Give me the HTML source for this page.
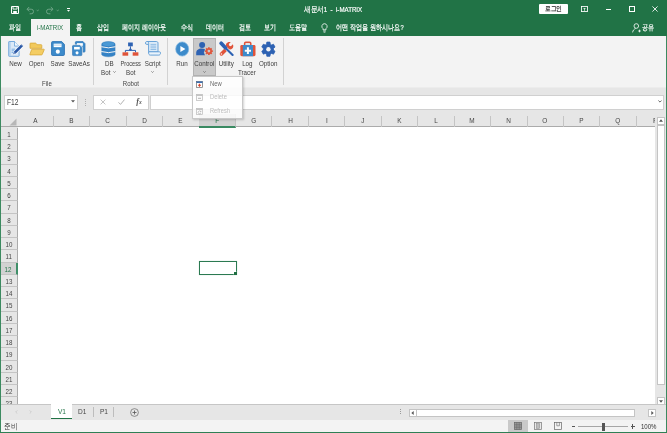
<!DOCTYPE html>
<html lang="ko">
<head>
<meta charset="utf-8">
<title>새문서1 - i-MATRIX</title>
<style>
*{box-sizing:border-box;margin:0;padding:0}
html,body{width:667px;height:433px;overflow:hidden;background:#fff}
body{font-family:"Liberation Sans",sans-serif;font-size:7.5px;color:#333;position:relative}
.abs{position:absolute}
#win{will-change:transform;position:absolute;left:0;top:0;width:667px;height:433px;background:#fff;overflow:hidden}
#title{position:absolute;left:0;top:0;width:667px;height:36px;background:#217346}
.tt{position:absolute;color:#fff;font-size:7.5px;white-space:nowrap;line-height:10px;-webkit-text-stroke:.2px #fff}
.sx{display:inline-block;transform-origin:0 50%;transform:scaleX(.82);white-space:nowrap}
.sxc{display:inline-block;transform-origin:50% 50%;transform:scaleX(.82);white-space:nowrap}
#tabact{position:absolute;left:31px;top:19px;width:38.5px;height:18px;background:#f3f3f3;color:#217346;text-align:center;line-height:18px;font-size:7.5px}
#ribbon{position:absolute;left:1px;top:36px;width:665px;height:52px;background:#f3f3f3;border-bottom:1px solid #ececec}
.lbl{position:absolute;font-size:7.6px;line-height:8.6px;color:#3c3c3c;text-align:center;white-space:nowrap;width:40px}
.grp{position:absolute;font-size:7.4px;line-height:9px;color:#444;text-align:center;white-space:nowrap;width:40px;top:79px}
.sep{position:absolute;top:38px;height:47px;width:1px;background:#d2d2d2}
.ico{position:absolute;top:41px;width:16px;height:15px}
#fbar{position:absolute;left:1px;top:88px;width:665px;height:26px;background:#e6e6e6}
.box{position:absolute;background:#fff;border:1px solid #d0d0d0}
#colhdr{position:absolute;left:1px;top:114px;width:655px;height:13px;background:#e6e6e6;border-bottom:1px solid #ababab}
.ch{position:absolute;top:1.5px;height:11px;width:36.45px;text-align:center;font-size:7.3px;line-height:9.6px;color:#444;border-right:1px solid #c4c4c4}
#rowhdr{position:absolute;left:1px;top:127px;width:17px;height:277px;background:#e6e6e6;overflow:hidden}
.rh{position:absolute;left:0;width:17px;height:12.25px;text-align:center;font-size:7.2px;line-height:13.8px;color:#444;border-bottom:1px solid #c4c4c4;border-right:1px solid #ababab;padding-right:.5px}
#sel{position:absolute;left:199px;top:261px;width:38px;height:14px;border:1px solid #2b7a51;box-shadow:0 0 .6px #2b7a51}
#selh{position:absolute;left:234.3px;top:272.4px;width:3px;height:3px;background:#1f6e42;box-shadow:-.6px -.6px 0 #fff}
#vscroll{position:absolute;left:655px;top:114px;width:11px;height:290px;background:#e6e6e6}
#tabbar{position:absolute;left:1px;top:404px;width:665px;height:16px;background:#e6e6e6;border-top:1px solid #c6c6c6}
#status{position:absolute;left:1px;top:420px;width:665px;height:12px;background:#f3f3f3}
.brd{position:absolute;background:#217346}
.menu{position:absolute;left:192px;top:75.7px;width:50.5px;height:43px;background:rgba(255,255,255,.82);border:1px solid #c8c8c8;box-shadow:1px 1px 2px rgba(0,0,0,.18);z-index:20}
.mi{position:absolute;left:16.8px;font-size:7.4px;line-height:9px;white-space:nowrap}
</style>
</head>
<body>
<div id="win">

<!-- ===== TITLE / TABS ===== -->
<div id="title">
  <!-- quick access: save -->
  <svg class="abs" style="left:11px;top:6px" width="8" height="8" viewBox="0 0 8 8"><path d="M.5 .5h7v7h-7z" fill="none" stroke="#fff" stroke-width="1"/><path d="M2 .5v2.6h4V.5" fill="none" stroke="#fff" stroke-width=".9"/><rect x="2.2" y="5" width="3.6" height="2.5" fill="#fff"/></svg>
  <!-- undo / redo (dim) -->
  <svg class="abs" style="left:26px;top:5.500px" width="14" height="9" viewBox="0 0 14 9"><path d="M1 3.2h4.2a2.3 2.3 0 0 1 0 4.6H3.6" fill="none" stroke="#6fa587" stroke-width="1"/><path d="M3.2 1 1 3.2l2.2 2.2" fill="none" stroke="#6fa587" stroke-width="1"/><path d="M10.6 3.8l1.1 1.1 1.1-1.1" fill="none" stroke="#6fa587" stroke-width=".8"/></svg>
  <svg class="abs" style="left:45px;top:5.500px" width="16" height="9" viewBox="0 0 16 9"><path d="M8 3.2H3.8a2.3 2.3 0 0 0 0 4.6h1.6" fill="none" stroke="#6fa587" stroke-width="1"/><path d="M5.8 1 8 3.2 5.8 5.4" fill="none" stroke="#6fa587" stroke-width="1"/><path d="M11.6 3.8l1.1 1.1 1.1-1.1" fill="none" stroke="#6fa587" stroke-width=".8"/></svg>
  <svg class="abs" style="left:66px;top:7px" width="5" height="6" viewBox="0 0 5 6"><rect x="1" y="1" width="3" height="1" fill="#fff"/><path d="M1 3h3L2.5 4.8z" fill="#fff"/></svg>

  <div class="tt" style="left:304px;top:4.800px"><span class="sx">새문서1 &nbsp;-&nbsp; i-MATRIX</span></div>

  <!-- login button -->
  <div class="abs" style="left:539px;top:3.800px;width:29px;height:10.500px;background:#fff;border-radius:1px;color:#222;font-size:7.200px;line-height:10.500px;text-align:center;-webkit-text-stroke:.2px #222"><span class="sxc">로그인</span></div>
  <!-- ribbon display options -->
  <svg class="abs" style="left:581px;top:6px" width="7" height="6" viewBox="0 0 8 7"><rect x=".5" y=".5" width="7" height="6" fill="none" stroke="#fff" stroke-width="1"/><path d="M4 5.6V2.4M2.8 3.5 4 2.3l1.2 1.2" fill="none" stroke="#fff" stroke-width=".8"/></svg>
  <div class="abs" style="left:606px;top:9px;width:5px;height:1px;background:#fff"></div>
  <div class="abs" style="left:629px;top:6.300px;width:5.500px;height:5.500px;border:1px solid #fff"></div>
  <svg class="abs" style="left:652px;top:6.200px" width="6" height="6" viewBox="0 0 7 7"><path d="M.5 .5l6 6M6.5 .5l-6 6" stroke="#fff" stroke-width="1" fill="none"/></svg>

  <!-- tabs -->
  <div class="tt" style="left:9px;top:23px"><span class="sx" style="transform:scaleX(.76)">파일</span></div>
  <div class="tt" style="left:76px;top:23px"><span class="sx" style="transform:scaleX(.76)">홈</span></div>
  <div class="tt" style="left:96.500px;top:23px"><span class="sx" style="transform:scaleX(.76)">삽입</span></div>
  <div class="tt" style="left:121.800px;top:23px"><span class="sx" style="transform:scaleX(.76)">페이지 레이아웃</span></div>
  <div class="tt" style="left:180.500px;top:23px"><span class="sx" style="transform:scaleX(.76)">수식</span></div>
  <div class="tt" style="left:206px;top:23px"><span class="sx" style="transform:scaleX(.76)">데이터</span></div>
  <div class="tt" style="left:238.500px;top:23px"><span class="sx" style="transform:scaleX(.76)">검토</span></div>
  <div class="tt" style="left:263.700px;top:23px"><span class="sx" style="transform:scaleX(.76)">보기</span></div>
  <div class="tt" style="left:288.500px;top:23px"><span class="sx" style="transform:scaleX(.76)">도움말</span></div>
  <!-- lightbulb -->
  <svg class="abs" style="left:321.200px;top:22.800px" width="7" height="10" viewBox="0 0 7 10"><path d="M3.5 .7a2.7 2.7 0 0 0-1.5 4.9v1.2h3V5.600a2.700 2.700 0 0 0-1.500-4.900z" fill="none" stroke="#fff" stroke-width=".8"/><path d="M2.200 8h2.600M2.600 9.200h1.800" stroke="#fff" stroke-width=".7"/></svg>
  <div class="tt" style="left:335.500px;top:23px"><span class="sx" style="transform:scaleX(.765)">어떤 작업을 원하시나요?</span></div>
  <!-- share -->
  <svg class="abs" style="left:631.500px;top:23px" width="9" height="10" viewBox="0 0 9 10"><circle cx="4.300" cy="3" r="2.300" fill="none" stroke="#fff" stroke-width=".8"/><path d="M.6 9.400c.3-2 1.500-3.400 3-3.900M6.200 8h2.600M7.500 6.700v2.600" fill="none" stroke="#fff" stroke-width=".8"/></svg>
  <div class="tt" style="left:642px;top:23px"><span class="sx" style="transform:scaleX(.76)">공유</span></div>
</div>
<div id="tabact"><span class="sxc">i-MATRIX</span></div>

<!-- ===== RIBBON ===== -->
<div id="ribbon"></div>
<div id="ribicons">
<svg class="abs" style="left:8px;top:41px" width="16" height="16" viewBox="0 0 16 16">
<path d="M1.200 .5h5.300l4.600 4.600v9.700q0 .5-.5 .5H1.200q-.5 0-.5-.5V1q0-.5 .5-.5z" fill="#dbe9f7" stroke="#6aa3da" stroke-width=".9"/>
<path d="M1.200 .9h1.400v14H1.200z" fill="#a9cbec"/>
<path d="M6.500 .5v4.600h4.600" fill="#f2f7fd" stroke="#6aa3da" stroke-width=".8"/>
<path d="M3.600 8.200h3.400M3.600 9.800h3M3.600 11.400h2" stroke="#7aaee2" stroke-width="1"/>
<path d="M14 4.400L6.800 11.600" stroke="#fff" stroke-width="4" stroke-linecap="butt"/>
<path d="M5 13.600l.6-3 2.600 2.400z" fill="#fff"/>
<path d="M14.300 4.100L6.900 11.500" stroke="#2a58a6" stroke-width="2.700"/>
<path d="M13 3.400l2 2" stroke="#fff" stroke-width=".5"/>
<path d="M5.200 13.300l.8-2.700 1.900 1.900z" fill="#2a58a6"/>
<path d="M5.900 11.600l1.100 1.100" stroke="#fff" stroke-width=".5"/>
</svg>
<svg class="abs" style="left:29px;top:42px" width="16" height="14" viewBox="0 0 16 14">
<path d="M1 6.300V1.700q0-.6 .6-.6h4.800q.5 0 .8 .4l.7 1.200h4.300q.6 0 .6 .6v3z" fill="#f2c95c" stroke="#d8a838" stroke-width=".8"/>
<path d="M3.100 7.200h11.700q.6 0 .4 .6l-2 4.700q-.2 .4-.7 .4H1.200q-.5 0-.3-.5l1.700-4.800q.1-.4 .5-.4z" fill="#f4cd63" stroke="#d8a838" stroke-width=".8"/>
</svg>
<svg class="abs" style="left:51px;top:41px" width="15" height="16" viewBox="0 0 15 16"><g transform="translate(0.1 0.1) scale(0.9857142857142858 1.0275862068965518)">
<path d="M.5 1.500q0-1 1-1h9.300l2.700 2.700v9.800q0 1-1 1h-11q-1 0-1-1z" fill="#3d8bcb" stroke="#2f74b5" stroke-width=".9"/>
<rect x="2.600" y="2.500" width="8" height="3.400" fill="#fff"/>
<circle cx="6.800" cy="10.300" r="2.100" fill="#fff"/>
</g><path d="M2.800 4.100h7.400" stroke="#6aa6d9" stroke-width=".5"/></svg>
<svg class="abs" style="left:71px;top:41px" width="16" height="16" viewBox="0 0 16 16"><g transform="translate(4 0.2) scale(0.7428571428571429 0.7793103448275862)">
<path d="M.5 1.500q0-1 1-1h9.300l2.700 2.700v9.800q0 1-1 1h-11q-1 0-1-1z" fill="#3d8bcb" stroke="#2f74b5" stroke-width=".9"/>
<rect x="2.600" y="2.500" width="8" height="3.400" fill="#fff"/>
<circle cx="6.800" cy="10.300" r="2.100" fill="#fff"/>
</g><g transform="translate(1.2 4) scale(0.7142857142857143 0.7586206896551724)"><path d="M.5 1.500q0-1 1-1h9.300l2.700 2.700v9.800q0 1-1 1h-11q-1 0-1-1z" fill="#f3f3f3" stroke="#f3f3f3" stroke-width="2.600"/>
<path d="M.5 1.500q0-1 1-1h9.300l2.700 2.700v9.800q0 1-1 1h-11q-1 0-1-1z" fill="#3d8bcb" stroke="#2f74b5" stroke-width=".9"/>
<rect x="2.600" y="2.500" width="8" height="3.400" fill="#fff"/>
<circle cx="6.800" cy="10.300" r="2.100" fill="#fff"/>
</g></svg>
<svg class="abs" style="left:101px;top:40.500px" width="15" height="17" viewBox="0 0 15 17">
<path d="M.7 3.100a6.700 2.600 0 0 1 13.400 0v10.200a6.700 2.500 0 0 1-13.400 0z" fill="#3583c6" stroke="#2f78b8" stroke-width=".4"/>
<ellipse cx="7.400" cy="3.100" rx="6.100" ry="2.100" fill="#4b99d5"/>
<path d="M.2 5.700q7.200 2.300 14.400 0" fill="none" stroke="#f3f3f3" stroke-width="1"/>
<path d="M.2 10.500q7.200 2.300 14.400 0" fill="none" stroke="#f3f3f3" stroke-width="1"/>
</svg>
<svg class="abs" style="left:122px;top:41.500px" width="17" height="15" viewBox="0 0 17 15">
<rect x="6.100" y=".5" width="4.700" height="3.800" fill="#2d62b3"/>
<path d="M8.450 4.300v3.600M3.400 10.400V8.400h10.100v2" fill="none" stroke="#2d62b3" stroke-width="1"/>
<path d="M8.450 6.100l1.500 1.500-1.500 1.500-1.500-1.500z" fill="#2d62b3"/>
<rect x=".5" y="10.300" width="5.700" height="3.400" fill="#e0543a"/>
<rect x="10.700" y="10.300" width="5.700" height="3.400" fill="#e0543a"/>
</svg>
<svg class="abs" style="left:145px;top:41px" width="16" height="15" viewBox="0 0 16 15">
<path d="M3.600 2.200c0-1.200-.8-1.700-1.600-1.700h9.400c1 0 1.600.7 1.600 1.700v8.600H3.600z" fill="#dcebf8" stroke="#5b9bd5" stroke-width=".9"/>
<path d="M2 .5c-1 0-1.600.7-1.600 1.600 0 .8.600 1.300 1.400 1.300h1.800" fill="#dcebf8" stroke="#5b9bd5" stroke-width=".9"/>
<path d="M3.600 10.800h11c.6 0 .9.500.9 1.300 0 1.100-.7 2-1.700 2H5.300c-1 0-1.700-.9-1.700-2z" fill="#eaf3fb" stroke="#5b9bd5" stroke-width=".9"/>
<path d="M5.500 3.400h5.700M5.500 5.100h5.700M5.500 6.800h5.700M5.500 8.500h5.700" stroke="#7fb2e0" stroke-width=".8"/>
</svg>
<svg class="abs" style="left:175px;top:40.500px" width="15" height="16" viewBox="0 0 15 16">
<ellipse cx="7.200" cy="8" rx="6.500" ry="7.100" fill="#3d8bcb" stroke="#7db4e0" stroke-width=".7"/>
<path d="M5.400 4.900l5 3.100-5 3.100z" fill="#fff"/>
</svg>
<div class="abs" style="left:192.700px;top:37.700px;width:23px;height:38px;background:#c9c9c9;border:1px solid #b3b3b3"></div>
<svg class="abs" style="left:194.500px;top:41px" width="18" height="15" viewBox="0 0 18 15">
<circle cx="7.100" cy="3.900" r="3" fill="#2d62b3"/>
<path d="M1.200 14.300v-2.300c0-2.700 2.300-4.400 5.400-4.400 1.300 0 2.500.3 3.500.9l-1.300 2.900 1.200 2.900z" fill="#2d62b3"/>
<g fill="#e0543a"><circle cx="13.9" cy="10.1" r="2.89"/><rect x="13.00" y="6.20" width="1.79" height="1.95" rx=".3" transform="rotate(0.0 13.9 10.1)"/><rect x="13.00" y="6.20" width="1.79" height="1.95" rx=".3" transform="rotate(45.0 13.9 10.1)"/><rect x="13.00" y="6.20" width="1.79" height="1.95" rx=".3" transform="rotate(90.0 13.9 10.1)"/><rect x="13.00" y="6.20" width="1.79" height="1.95" rx=".3" transform="rotate(135.0 13.9 10.1)"/><rect x="13.00" y="6.20" width="1.79" height="1.95" rx=".3" transform="rotate(180.0 13.9 10.1)"/><rect x="13.00" y="6.20" width="1.79" height="1.95" rx=".3" transform="rotate(225.0 13.9 10.1)"/><rect x="13.00" y="6.20" width="1.79" height="1.95" rx=".3" transform="rotate(270.0 13.9 10.1)"/><rect x="13.00" y="6.20" width="1.79" height="1.95" rx=".3" transform="rotate(315.0 13.9 10.1)"/></g><circle cx="13.9" cy="10.1" r="1.4" fill="#c9c9c9"/>
</svg>
<svg class="abs" style="left:218.500px;top:41px" width="15" height="16" viewBox="0 0 15 16">
<path d="M13.900 3.200l-2 2-1.700-.4-.4-1.700 2-2c-1.500-.5-3.100-.1-4 1-.9 1-1.100 2.400-.6 3.600l-6 6c-.7.700-.7 1.800 0 2.500s1.800.7 2.500 0l6-6c1.200.5 2.600.3 3.600-.6 1.100-1 1.300-2.800.6-4.400z" fill="#e0543a"/>
<circle cx="2.400" cy="13" r=".8" fill="#f3f3f3"/>
<path d="M2 2.200l11.600 11.700" stroke="#f3f3f3" stroke-width="3" stroke-linecap="round"/>
<path d="M7 7.400l6.600 6.500" stroke="#2d62b3" stroke-width="2.100" stroke-linecap="round"/>
<path d="M2.200 2.300l4.200 4.400" stroke="#2d62b3" stroke-width="3.700" stroke-linecap="round"/>
</svg>
<svg class="abs" style="left:239.500px;top:40.500px" width="16" height="16" viewBox="0 0 16 16">
<path d="M4.600 4.400V2.400q0-1.200 1.200-1.200h3.800q1.200 0 1.200 1.200V4.400" fill="#e4e4e4" stroke="#e0543a" stroke-width="1.500"/>
<rect x=".3" y="4" width="15.200" height="11.200" rx="1.400" fill="#e0543a"/>
<rect x="2.800" y="4" width="10.200" height="11.200" fill="#3d8bcb"/>
<path d="M7.900 6.300v6.800M4.800 9.700h6.200" stroke="#fff" stroke-width="2"/>
</svg>
<svg class="abs" style="left:261px;top:40.500px" width="15" height="17" viewBox="0 0 15 17">
<path d="M5.56 3.16L5.84 1.09L8.96 1.09L9.24 3.16L10.63 4.00L12.47 3.22L14.03 6.07L12.47 7.36L12.47 9.04L14.03 10.33L12.47 13.18L10.63 12.40L9.24 13.24L8.96 15.31L5.84 15.31L5.56 13.24L4.17 12.40L2.33 13.18L0.77 10.33L2.33 9.04L2.33 7.36L0.77 6.07L2.33 3.22L4.17 4.00z" fill="#2d62b3" stroke="#2d62b3" stroke-width=".8" stroke-linejoin="round"/><ellipse cx="7.4" cy="8.2" rx="2.18" ry="2.3" fill="#f3f3f3"/>
</svg>
<div class="sep" style="left:92.9px"></div>
<div class="sep" style="left:166.6px"></div>
<div class="sep" style="left:282.7px"></div>
<div class="lbl" style="left:-4.7px;top:59.7px"><span class="sxc">New</span></div>
<div class="lbl" style="left:16.4px;top:59.7px"><span class="sxc">Open</span></div>
<div class="lbl" style="left:37.5px;top:59.7px"><span class="sxc">Save</span></div>
<div class="lbl" style="left:59.1px;top:59.7px"><span class="sxc">SaveAs</span></div>
<div class="lbl" style="left:88.8px;top:59.7px"><span class="sxc">DB</span></div>
<div class="lbl" style="left:85.9px;top:68.8px"><span class="sxc">Bot</span></div>
<div class="lbl" style="left:110.5px;top:59.7px"><span class="sxc" style="transform:scaleX(0.74)">Process</span></div>
<div class="lbl" style="left:110.5px;top:68.8px"><span class="sxc">Bot</span></div>
<div class="lbl" style="left:132.5px;top:59.7px"><span class="sxc">Script</span></div>
<div class="lbl" style="left:162.0px;top:59.7px"><span class="sxc">Run</span></div>
<div class="lbl" style="left:184.2px;top:59.7px"><span class="sxc">Control</span></div>
<div class="lbl" style="left:205.8px;top:59.7px"><span class="sxc">Utility</span></div>
<div class="lbl" style="left:227.2px;top:59.7px"><span class="sxc">Log</span></div>
<div class="lbl" style="left:227.1px;top:68.8px"><span class="sxc">Tracer</span></div>
<div class="lbl" style="left:248.4px;top:59.7px"><span class="sxc">Option</span></div>
<div class="grp" style="left:27.3px;top:78.5px"><span class="sxc">File</span></div>
<div class="grp" style="left:110.5px;top:78.5px"><span class="sxc">Robot</span></div>
<svg class="abs" style="left:112.8px;top:70.8px" width="3" height="2" viewBox="0 0 3 2"><path d="M.3 .3l1.200 1.200L2.700 .3" fill="none" stroke="#555" stroke-width=".6"/></svg>
<svg class="abs" style="left:150.8px;top:70.7px" width="3" height="2" viewBox="0 0 3 2"><path d="M.3 .3l1.200 1.200L2.700 .3" fill="none" stroke="#555" stroke-width=".6"/></svg>
<svg class="abs" style="left:202.8px;top:71px" width="3" height="2" viewBox="0 0 3 2"><path d="M.3 .3l1.200 1.200L2.700 .3" fill="none" stroke="#555" stroke-width=".6"/></svg>
</div>
<div class="menu">
<svg class="abs" style="left:2.800px;top:4.300px" width="7" height="7" viewBox="0 0 7 7"><rect x=".4" y=".4" width="6.200" height="6.200" fill="#fff" stroke="#6b6b6b" stroke-width=".7"/><rect x=".4" y=".4" width="6.200" height="1.600" fill="#3d6fb0"/><path d="M3.500 2.800v3M2 4.300h3" stroke="#d8432a" stroke-width="1.100"/></svg>
<div class="mi" style="top:2.500px;color:#6a6a6a"><span class="sx" style="transform:scaleX(.79)">New</span></div>
<svg class="abs" style="left:2.800px;top:17px" width="7" height="7" viewBox="0 0 7 7"><rect x=".4" y=".4" width="6.200" height="6.200" fill="#fbfbfb" stroke="#b9b9b9" stroke-width=".7"/><rect x=".4" y=".4" width="6.200" height="1.600" fill="#c4c4c4"/><path d="M2 4.300h3" stroke="#b5b5b5" stroke-width="1"/></svg>
<div class="mi" style="top:15.800px;color:#bcbcbc"><span class="sx" style="transform:scaleX(.79)">Delete</span></div>
<svg class="abs" style="left:2.800px;top:31px" width="7" height="7" viewBox="0 0 7 7"><rect x=".4" y=".4" width="6.200" height="6.200" fill="#fbfbfb" stroke="#b9b9b9" stroke-width=".7"/><rect x=".4" y=".4" width="6.200" height="1.600" fill="#c4c4c4"/><path d="M4.800 3.500a1.500 1.500 0 1 0 .2 1.600M5 2.800v1h-1" fill="none" stroke="#b0b0b0" stroke-width=".7"/></svg>
<div class="mi" style="top:29.300px;color:#bcbcbc"><span class="sx" style="transform:scaleX(.77)">Refresh</span></div>
</div>

<!-- ===== FORMULA BAR ===== -->
<div id="fbar"></div>
<div class="box" style="left:3.500px;top:94.500px;width:74px;height:15px"></div>
<div class="abs" style="left:6.500px;top:96.800px;font-size:9px;line-height:10px;color:#444"><span class="sx" style="transform:scaleX(.74)">F12</span></div>
<svg class="abs" style="left:70.500px;top:100px" width="4" height="3" viewBox="0 0 4 3"><path d="M0 .3h4L2 2.600z" fill="#555"/></svg>
<div class="abs" style="left:85px;top:98.500px;width:1px;height:1px;background:#b0b0b0;box-shadow:0 2px 0 #b0b0b0,0 4px 0 #b0b0b0,0 6px 0 #b0b0b0"></div>
<div class="box" style="left:93px;top:94.500px;width:56px;height:15px"></div>
<svg class="abs" style="left:99.500px;top:99px" width="6" height="6" viewBox="0 0 6 6"><path d="M.6 .6l4.800 4.800M5.400 .6L.6 5.400" stroke="#b5b5b5" stroke-width=".8" fill="none"/></svg>
<svg class="abs" style="left:117.500px;top:99px" width="7" height="6" viewBox="0 0 7 6"><path d="M.5 3.400l2 2L6.500 .6" stroke="#a8a8a8" stroke-width=".9" fill="none"/></svg>
<div class="abs" style="left:136.300px;top:97px;font-family:'Liberation Serif',serif;font-style:italic;font-weight:bold;font-size:8px;line-height:10px;color:#555">f<span style="font-size:5.500px">x</span></div>
<div class="box" style="left:150px;top:94.500px;width:513.500px;height:15px"></div>
<svg class="abs" style="left:657.500px;top:100.300px" width="4" height="3" viewBox="0 0 4 3"><path d="M.4 .5l1.600 1.600L3.600 .5" stroke="#444" stroke-width=".8" fill="none"/></svg>

<!-- ===== GRID ===== -->
<div id="colhdr">
<svg class="abs" style="left:8px;top:3.500px" width="8" height="8" viewBox="0 0 8 8"><path d="M7.500 .5v7h-7z" fill="#b7b7b7"/></svg><div class="ch" style="left:16.30px"><span class="sxc" style="transform:scaleX(.88)">A</span></div>
<div class="ch" style="left:52.75px"><span class="sxc" style="transform:scaleX(.88)">B</span></div>
<div class="ch" style="left:89.20px"><span class="sxc" style="transform:scaleX(.88)">C</span></div>
<div class="ch" style="left:125.65px"><span class="sxc" style="transform:scaleX(.88)">D</span></div>
<div class="ch" style="left:162.10px"><span class="sxc" style="transform:scaleX(.88)">E</span></div>
<div class="ch" style="left:197.95px;width:37px;background:#d2d2d2;color:#217346;border-bottom:2px solid #3a8a62;top:0;height:13.500px;line-height:13.800px"><span class="sxc" style="transform:scaleX(.88)">F</span></div>
<div class="ch" style="left:235.00px"><span class="sxc" style="transform:scaleX(.88)">G</span></div>
<div class="ch" style="left:271.45px"><span class="sxc" style="transform:scaleX(.88)">H</span></div>
<div class="ch" style="left:307.90px"><span class="sxc" style="transform:scaleX(.88)">I</span></div>
<div class="ch" style="left:344.35px"><span class="sxc" style="transform:scaleX(.88)">J</span></div>
<div class="ch" style="left:380.80px"><span class="sxc" style="transform:scaleX(.88)">K</span></div>
<div class="ch" style="left:417.25px"><span class="sxc" style="transform:scaleX(.88)">L</span></div>
<div class="ch" style="left:453.70px"><span class="sxc" style="transform:scaleX(.88)">M</span></div>
<div class="ch" style="left:490.15px"><span class="sxc" style="transform:scaleX(.88)">N</span></div>
<div class="ch" style="left:526.60px"><span class="sxc" style="transform:scaleX(.88)">O</span></div>
<div class="ch" style="left:563.05px"><span class="sxc" style="transform:scaleX(.88)">P</span></div>
<div class="ch" style="left:599.50px"><span class="sxc" style="transform:scaleX(.88)">Q</span></div>
<div class="ch" style="left:635.95px;width:30px;border-right:0;text-align:left;padding-left:16px">R</div>
</div>
<div id="rowhdr">
<div class="rh" style="top:0.95px"><span class="sxc" style="transform:scaleX(.86)">1</span></div>
<div class="rh" style="top:13.20px"><span class="sxc" style="transform:scaleX(.86)">2</span></div>
<div class="rh" style="top:25.45px"><span class="sxc" style="transform:scaleX(.86)">3</span></div>
<div class="rh" style="top:37.70px"><span class="sxc" style="transform:scaleX(.86)">4</span></div>
<div class="rh" style="top:49.95px"><span class="sxc" style="transform:scaleX(.86)">5</span></div>
<div class="rh" style="top:62.20px"><span class="sxc" style="transform:scaleX(.86)">6</span></div>
<div class="rh" style="top:74.45px"><span class="sxc" style="transform:scaleX(.86)">7</span></div>
<div class="rh" style="top:86.70px"><span class="sxc" style="transform:scaleX(.86)">8</span></div>
<div class="rh" style="top:98.95px"><span class="sxc" style="transform:scaleX(.86)">9</span></div>
<div class="rh" style="top:111.20px"><span class="sxc" style="transform:scaleX(.86)">10</span></div>
<div class="rh" style="top:123.45px"><span class="sxc" style="transform:scaleX(.86)">11</span></div>
<div class="rh" style="top:135.70px;background:#d2d2d2;color:#217346;border-right:2px solid #3f8f68"><span class="sxc" style="transform:scaleX(.86)">12</span></div>
<div class="rh" style="top:147.95px"><span class="sxc" style="transform:scaleX(.86)">13</span></div>
<div class="rh" style="top:160.20px"><span class="sxc" style="transform:scaleX(.86)">14</span></div>
<div class="rh" style="top:172.45px"><span class="sxc" style="transform:scaleX(.86)">15</span></div>
<div class="rh" style="top:184.70px"><span class="sxc" style="transform:scaleX(.86)">16</span></div>
<div class="rh" style="top:196.95px"><span class="sxc" style="transform:scaleX(.86)">17</span></div>
<div class="rh" style="top:209.20px"><span class="sxc" style="transform:scaleX(.86)">18</span></div>
<div class="rh" style="top:221.45px"><span class="sxc" style="transform:scaleX(.86)">19</span></div>
<div class="rh" style="top:233.70px"><span class="sxc" style="transform:scaleX(.86)">20</span></div>
<div class="rh" style="top:245.95px"><span class="sxc" style="transform:scaleX(.86)">21</span></div>
<div class="rh" style="top:258.20px"><span class="sxc" style="transform:scaleX(.86)">22</span></div>
<div class="rh" style="top:270.45px"><span class="sxc" style="transform:scaleX(.86)">23</span></div>
</div>
<div id="sel"></div><div id="selh"></div>
<div id="vscroll">
<div class="box" style="left:2px;top:2.500px;width:8px;height:8px;border-color:#c4c4c4"></div>
<svg class="abs" style="left:4px;top:5.300px" width="4" height="3" viewBox="0 0 4 3"><path d="M0 2.700h4L2 .3z" fill="#555"/></svg>
<div class="box" style="left:2px;top:10.500px;width:8px;height:260px;border-color:#c4c4c4"></div>
<div class="box" style="left:2px;top:282.500px;width:8px;height:8px;border-color:#c4c4c4"></div>
<svg class="abs" style="left:4px;top:285.500px" width="4" height="3" viewBox="0 0 4 3"><path d="M0 .3h4L2 2.700z" fill="#555"/></svg>
</div>

<!-- ===== SHEET TABS / STATUS ===== -->
<div id="tabbar">
<svg class="abs" style="left:13.500px;top:5px" width="3" height="4" viewBox="0 0 3 4"><path d="M2.300 .4L.7 2l1.600 1.600" stroke="#c4c4c4" stroke-width=".7" fill="none"/></svg>
<svg class="abs" style="left:27.500px;top:5px" width="3" height="4" viewBox="0 0 3 4"><path d="M.7 .4L2.300 2 .7 3.600" stroke="#c4c4c4" stroke-width=".7" fill="none"/></svg>
<div class="abs" style="left:50.300px;top:-1px;width:21px;height:15.300px;background:#fff;border-bottom:1.800px solid #217346;color:#217346;font-size:8px;line-height:15.600px;text-align:center"><span class="sxc">V1</span></div>
<div class="abs" style="left:71px;top:0;width:21px;height:14px;color:#444;font-size:8px;line-height:14.600px;text-align:center"><span class="sxc">D1</span></div>
<div class="abs" style="left:92px;top:0;width:21px;height:14px;color:#444;font-size:8px;line-height:14.600px;text-align:center"><span class="sxc">P1</span></div>
<div class="abs" style="left:91.500px;top:2px;width:1px;height:10px;background:#bdbdbd"></div>
<div class="abs" style="left:112px;top:2px;width:1px;height:10px;background:#bdbdbd"></div>
<svg class="abs" style="left:128.800px;top:2.600px" width="9" height="9" viewBox="0 0 9 9"><circle cx="4.500" cy="4.500" r="3.900" fill="none" stroke="#666" stroke-width=".7"/><path d="M4.500 2.500v4M2.500 4.500h4" stroke="#555" stroke-width=".8"/></svg>
<div class="abs" style="left:399px;top:4px;width:1px;height:1px;background:#999;box-shadow:0 2px 0 #999,0 4px 0 #999"></div>
<div class="box" style="left:407.500px;top:3.500px;width:8px;height:8.500px;border-color:#c4c4c4"></div>
<svg class="abs" style="left:410px;top:5.800px" width="3" height="4" viewBox="0 0 3 4"><path d="M2.700 0v4L.3 2z" fill="#555"/></svg>
<div class="box" style="left:415px;top:3.500px;width:218.500px;height:8.500px;border-color:#c4c4c4"></div>
<div class="box" style="left:647px;top:3.500px;width:8px;height:8.500px;border-color:#c4c4c4"></div>
<svg class="abs" style="left:650px;top:5.800px" width="3" height="4" viewBox="0 0 3 4"><path d="M.3 0v4L2.700 2z" fill="#555"/></svg>
</div>
<div id="status">
<div class="abs" style="left:3px;top:1.500px;font-size:8px;line-height:9px;color:#333"><span class="sx">준비</span></div>
<div class="abs" style="left:506.500px;top:0;width:20px;height:12px;background:#c9c9c9"></div>
<svg class="abs" style="left:512.500px;top:2px" width="8" height="8" viewBox="0 0 8 8"><rect x=".4" y=".4" width="7.200" height="7.200" fill="#9a9a9a" stroke="#666" stroke-width=".7"/><path d="M2.800 .4v7.200M5.200 .4v7.200M.4 2.800h7.200M.4 5.200h7.200" stroke="#666" stroke-width=".6"/></svg>
<svg class="abs" style="left:533px;top:2px" width="8" height="8" viewBox="0 0 8 8"><rect x=".4" y=".4" width="7.200" height="7.200" fill="#e9e9e9" stroke="#777" stroke-width=".7"/><rect x="2.400" y="1.600" width="3.200" height="4.800" fill="#bdbdbd" stroke="#888" stroke-width=".5"/></svg>
<svg class="abs" style="left:553px;top:2px" width="8" height="8" viewBox="0 0 8 8"><rect x=".4" y=".4" width="7.200" height="7.200" fill="#f3f3f3" stroke="#666" stroke-width=".7"/><path d="M2.800 .4v3.400h2.600V.4" stroke="#666" stroke-width=".6" fill="none"/></svg>
<div class="abs" style="left:570.500px;top:6px;width:3.500px;height:1px;background:#555"></div>
<div class="abs" style="left:577px;top:6px;width:50px;height:1px;background:#a6a6a6"></div>
<div class="abs" style="left:601px;top:2.500px;width:2.500px;height:8px;background:#555"></div>
<div class="abs" style="left:629.500px;top:6px;width:4.500px;height:1px;background:#555"></div>
<div class="abs" style="left:631.300px;top:4px;width:1px;height:5px;background:#555"></div>
<div class="abs" style="left:640px;top:1.500px;font-size:7.400px;line-height:9px;color:#333"><span class="sx">100%</span></div>
</div>

<!-- window border -->
<div class="brd" style="left:0;top:36px;width:1px;height:397px;background:#3c8a60"></div>
<div class="brd" style="left:666px;top:36px;width:1px;height:397px;background:#3c8a60"></div>
<div class="brd" style="left:0;top:432px;width:667px;height:1px;background:#2f7f55"></div>
</div>
</body>
</html>
